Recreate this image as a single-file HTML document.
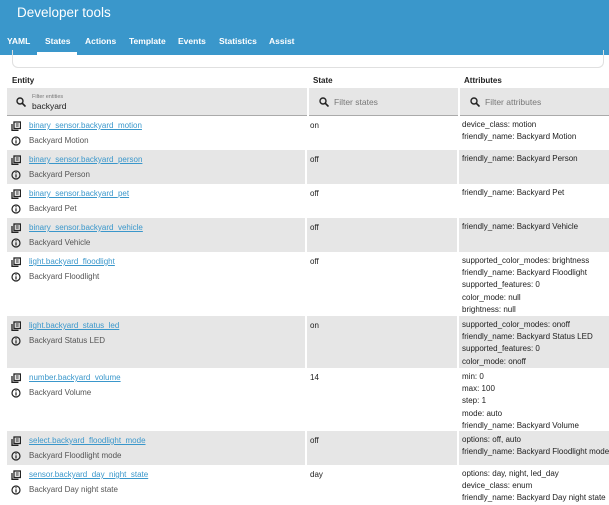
<!DOCTYPE html><html><head><style>
body{margin:0;width:609px;height:500px;overflow:hidden;background:#fff;font-family:"Liberation Sans",sans-serif;position:relative;color:#212121}
.hdr{position:absolute;left:0;top:0;width:609px;height:55px;background:#3a97cb;color:#fff}
.t{position:absolute;left:17px;top:5px;font-size:13.5px}
.tab{position:absolute;top:36px;font-size:8.5px;font-weight:bold}
.ul{position:absolute;left:37px;top:52px;width:40px;height:3px;background:#fff}
.card{position:absolute;left:12px;top:50px;width:590px;height:17px;border:1px solid #e0e0e0;border-top:none;border-radius:0 0 6px 6px}
.h{position:absolute;top:76px;font-size:8px;font-weight:bold}
.f{position:absolute;top:88px;height:27px;background:#e6e6e6;border-bottom:1px solid #aaa}
.row{position:absolute;left:7px;width:602px}
.g{background:#e6e6e6}
.sep{position:absolute;top:0;bottom:0;width:2px;background:#fff}
.ln{position:absolute;font-size:8px;line-height:15px;white-space:nowrap}
.at{line-height:12.2px}
a{color:#3a97cb;text-decoration:underline}
.ic{position:absolute;left:4px;width:10px;height:10px}
.nm{color:#555}
</style></head><body>
<div class="hdr"><div class="t">Developer tools</div>
<div class="tab" style="left:7px">YAML</div><div class="tab" style="left:45px">States</div><div class="tab" style="left:85px">Actions</div><div class="tab" style="left:129px">Template</div><div class="tab" style="left:178px">Events</div><div class="tab" style="left:219px">Statistics</div><div class="tab" style="left:269px">Assist</div><div class="ul"></div></div>
<div class="card"></div>
<div class="h" style="left:12px">Entity</div><div class="h" style="left:313px">State</div><div class="h" style="left:464px">Attributes</div>
<div class="f" style="left:7px;width:300px"><svg style="position:absolute;left:9px;top:9px" width="10" height="10" viewBox="0 0 10 10"><circle cx="4" cy="4" r="3" fill="none" stroke="#222" stroke-width="1.4"/><path d="M6 6L9.5 9.5" stroke="#222" stroke-width="1.6"/></svg><div style="position:absolute;left:25px;top:6px;font-size:5.5px;color:#777">Filter entities</div><div style="position:absolute;left:25px;top:13px;font-size:8.5px">backyard</div></div>
<div class="f" style="left:309px;width:149px"><svg style="position:absolute;left:10px;top:9px" width="10" height="10" viewBox="0 0 10 10"><circle cx="4" cy="4" r="3" fill="none" stroke="#222" stroke-width="1.4"/><path d="M6 6L9.5 9.5" stroke="#222" stroke-width="1.6"/></svg><div style="position:absolute;left:25px;top:9px;font-size:8.5px;color:#777">Filter states</div></div>
<div class="f" style="left:460px;width:149px"><svg style="position:absolute;left:10px;top:9px" width="10" height="10" viewBox="0 0 10 10"><circle cx="4" cy="4" r="3" fill="none" stroke="#222" stroke-width="1.4"/><path d="M6 6L9.5 9.5" stroke="#222" stroke-width="1.6"/></svg><div style="position:absolute;left:25px;top:9px;font-size:8.5px;color:#777">Filter attributes</div></div>

<div id="rows"></div>
<script>
var R=[[116,34,0,"binary_sensor.backyard_motion","Backyard Motion","on",["device_class: motion","friendly_name: Backyard Motion"]],
[150,34,1,"binary_sensor.backyard_person","Backyard Person","off",["friendly_name: Backyard Person"]],
[184,34,0,"binary_sensor.backyard_pet","Backyard Pet","off",["friendly_name: Backyard Pet"]],
[218,34,1,"binary_sensor.backyard_vehicle","Backyard Vehicle","off",["friendly_name: Backyard Vehicle"]],
[252,64,0,"light.backyard_floodlight","Backyard Floodlight","off",["supported_color_modes: brightness","friendly_name: Backyard Floodlight","supported_features: 0","color_mode: null","brightness: null"]],
[316,52,1,"light.backyard_status_led","Backyard Status LED","on",["supported_color_modes: onoff","friendly_name: Backyard Status LED","supported_features: 0","color_mode: onoff"]],
[368,63,0,"number.backyard_volume","Backyard Volume","14",["min: 0","max: 100","step: 1","mode: auto","friendly_name: Backyard Volume"]],
[431,34,1,"select.backyard_floodlight_mode","Backyard Floodlight mode","off",["options: off, auto","friendly_name: Backyard Floodlight mode"]],
[465,40,0,"sensor.backyard_day_night_state","Backyard Day night state","day",["options: day, night, led_day","device_class: enum","friendly_name: Backyard Day night state"]]];
var clip='<svg class="ic" style="top:5px" viewBox="0 0 10 10"><rect x="3" y="1" width="6.5" height="6.5" fill="none" stroke="#222" stroke-width="1.3"/><path d="M1 3V9.3H7.5" fill="none" stroke="#222" stroke-width="1.3"/><path d="M4.8 3H7.7M4.8 5H7.7" stroke="#222" stroke-width="0.9"/></svg>';
var info='<svg class="ic" style="top:20px" viewBox="0 0 10 10"><circle cx="5" cy="5" r="4" fill="none" stroke="#222" stroke-width="1.2"/><path d="M5 4.3V7.5" stroke="#222" stroke-width="1.2"/><circle cx="5" cy="2.8" r="0.7" fill="#222"/></svg>';
var h="";R.forEach(function(r){h+='<div class="row'+(r[2]?' g':'')+'" style="top:'+r[0]+'px;height:'+r[1]+'px">'+(r[2]?'<div class="sep" style="left:298px"></div><div class="sep" style="left:450px"></div>':'')+clip+info+
'<div class="ln" style="left:22px;top:2px"><a>'+r[3]+'</a></div><div class="ln nm" style="left:22px;top:17px">'+r[4]+'</div><div class="ln" style="left:303px;top:2px">'+r[5]+'</div><div class="ln at" style="left:455px;top:3px">'+r[6].join('<br>')+'</div></div>';});
document.getElementById('rows').innerHTML=h;
</script>
</body></html>
